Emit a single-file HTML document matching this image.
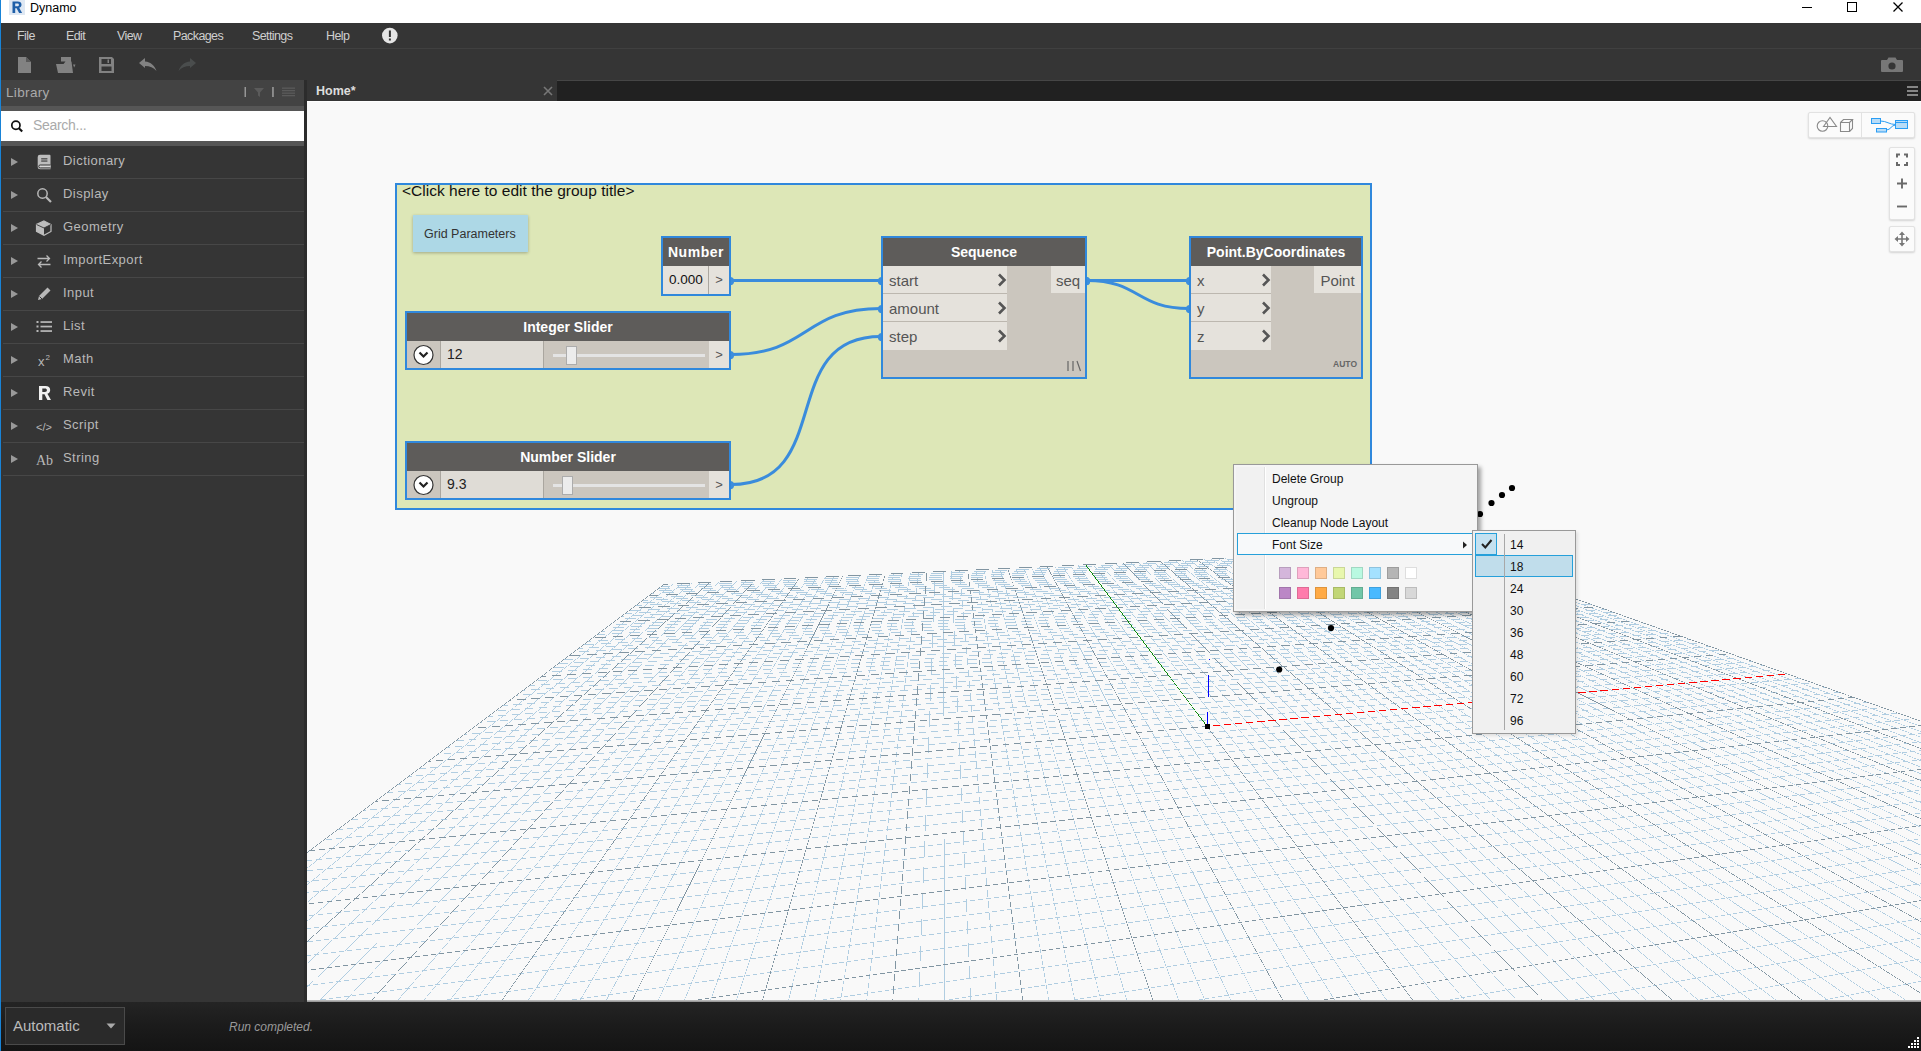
<!DOCTYPE html>
<html><head><meta charset="utf-8"><title>Dynamo</title>
<style>
*{box-sizing:border-box;margin:0;padding:0}
html,body{width:1921px;height:1051px;overflow:hidden;background:#353535}
body{position:relative;font-family:"Liberation Sans",sans-serif;font-size:13px;color:#ccc}
.abs{position:absolute}
#titlebar{left:0;top:0;width:1921px;height:23px;background:#fff}
#winborder{left:0;top:0;width:1px;height:1051px;background:#1883d7;z-index:50}
#title{left:30px;top:0;height:16px;line-height:16px;font-size:12.5px;color:#000}
#menubar{left:0;top:23px;width:1921px;height:26px;background:#353535}
#menusep{left:0;top:48px;width:1921px;height:1px;background:#404040}
#toolbar{left:0;top:49px;width:1921px;height:31px;background:#353535}
.mi{position:absolute;top:28px;height:16px;line-height:16px;font-size:12.5px;letter-spacing:-.6px;color:#cfcfcf}
#libhead{left:1px;top:80px;width:303px;height:26px;background:#434343}
#libhead2{left:1px;top:106px;width:303px;height:5px;background:#565656}
#libtitle{left:6px;top:84px;font-size:13.5px;line-height:17px;color:#aaa;letter-spacing:.35px}
#search{left:1px;top:111px;width:303px;height:30px;background:#fff}
#search2{left:1px;top:141px;width:303px;height:5px;background:#565656}
#searchtxt{left:33px;top:117px;font-size:14px;line-height:16px;color:#aaa;letter-spacing:-.3px}
#sidebar{left:1px;top:146px;width:303px;height:856px;background:#353535}
#gutter{left:304px;top:80px;width:3px;height:922px;background:#2c2c2c}
.li{position:absolute;left:0;width:303px;height:33px}
.li::after{content:"";position:absolute;left:2px;right:0;bottom:0;height:1px;background:#474747}
.li .tri{position:absolute;left:10px;top:12px;width:0;height:0;border-left:7px solid #999;border-top:4px solid transparent;border-bottom:4px solid transparent}
.li .tx{position:absolute;left:62px;top:6px;font-size:13px;line-height:17px;color:#b9b9b9;letter-spacing:.45px}
.li svg{position:absolute;left:34px;top:7px}
#tabstrip{left:557px;top:81px;width:1364px;height:20px;background:#212121}
#tab{left:307px;top:80px;width:250px;height:21px;background:#353535}
#tabtx{left:316px;top:84px;font-size:12.5px;line-height:15px;color:#ddd;font-weight:bold}
#canvas{left:307px;top:101px;width:1614px;height:899px;background:#f9f9f9;overflow:hidden}
#canvasline{left:307px;top:1000px;width:1614px;height:2px;background:linear-gradient(#c4c4c4,#8e8e8e)}
#status{left:0;top:1002px;width:1921px;height:49px;background:linear-gradient(#242424,#1b1b1b 50%,#141414)}
#combo{left:5px;top:1007px;width:120px;height:38px;border:1px solid #4a4a4a;background:#2a2a2a}
#combotx{left:13px;top:1017px;font-size:15px;line-height:18px;color:#bbb}
#runtx{left:229px;top:1020px;font-size:12px;line-height:15px;color:#999;font-style:italic}

#canvas .abs{position:absolute}
#group{left:88px;top:82px;width:977px;height:327px;background:#dde7b7;border:2px solid #3088dc}
#gtitle{left:95px;top:81px;font-size:15.5px;letter-spacing:.02px;line-height:17px;color:#111;white-space:nowrap}
#note{left:106px;top:114px;width:115px;height:37px;background:#add8e6;box-shadow:0 1px 3px rgba(0,0,0,.28)}
#notetx{left:117px;top:126px;font-size:12.5px;line-height:15px;color:#333;white-space:nowrap}
.node{position:absolute;border:2px solid #3088dc;background:#cbc6be}
.node .hd{position:absolute;left:0;top:0;right:0;height:28px;background:#5e5c5a;color:#fff;font-weight:bold;font-size:14px;line-height:28px;text-align:center;white-space:nowrap}
.port{position:absolute;background:#e5e2dc;height:28px;font-size:15px;line-height:30px;color:#555;border-bottom:1px solid #bcb7af}
.port.in{left:0;padding-left:6px}
.port.out{right:0;border-bottom:none;text-align:center;height:27px;line-height:29px}
.chev{position:absolute;right:0;top:7px}
.gt{position:absolute;right:0;background:#e5e2dc;color:#555;font-size:13px;text-align:center}
.sl .btn{position:absolute;left:0;top:28px;width:34px;height:27px;background:#cbc6be}
.sl .val{position:absolute;left:33px;top:28px;width:104px;height:27px;background:#dfdcd6;border-left:1px solid #aaa69f;border-right:1px solid #aaa69f;font-size:14px;line-height:27px;color:#222;padding-left:6px}
.sl .trk{position:absolute;left:146px;top:41px;width:152px;height:3px;background:#e4e4e4}
.sl .thb{position:absolute;top:33px;width:11px;height:19px;background:#ececec;border:1px solid #acacac}
.sl .gt{top:28px;width:20px;height:27px;line-height:27px}
.menu{position:absolute;background:#f5f5f5;border:1px solid #999;box-shadow:3px 3px 4px rgba(0,0,0,.35);font-size:12px;color:#111}
.menu .it{position:absolute;left:38px;height:22px;line-height:22px;white-space:nowrap}
.sw{position:absolute;width:12px;height:12px;border:1px solid rgba(0,0,0,.13)}
.vc{position:absolute;background:#fbfbfb;border:1px solid #e2e2e2;box-shadow:0 1px 2px rgba(0,0,0,.15);border-radius:2px}
</style></head><body>
<div class="abs" id="titlebar"></div>
<div class="abs" id="title">Dynamo</div>
<svg class="abs" style="left:9px;top:0" width="16" height="16" viewBox="0 0 16 16"><rect x="0" y="0" width="16" height="15" fill="#dfe8f3"/><path d="M3.5 1.5h5.2c2.4 0 3.8 1.2 3.8 3.2 0 1.6-.9 2.6-2.3 3l2.9 5.3h-3L7.600 8.200H6.200V13H3.500z M6.200 3.600v2.700h2.100c1 0 1.600-.5 1.600-1.400 0-.9-.6-1.300-1.600-1.300z" fill="#1f5fa8"/></svg>
<svg class="abs" style="left:1795px;top:0" width="120" height="20" viewBox="0 0 120 20" fill="none" stroke="#000" stroke-width="1"><path d="M7 7.500h10"/><rect x="52.500" y="2.500" width="9" height="9"/><path d="M98.500 2.500l9 9M107.500 2.500l-9 9" stroke-width="1.250"/></svg>
<div class="abs" id="menubar"></div><div class="abs" id="menusep"></div><div class="abs" id="toolbar"></div>
<div class="mi" style="left:17px">File</div><div class="mi" style="left:66px">Edit</div><div class="mi" style="left:117px">View</div><div class="mi" style="left:173px">Packages</div><div class="mi" style="left:252px">Settings</div><div class="mi" style="left:326px">Help</div>
<svg class="abs" style="left:381px;top:27px" width="18" height="18" viewBox="0 0 18 18"><circle cx="8.800" cy="8.600" r="7.800" fill="#e4e4e4"/><rect x="7.900" y="3.500" width="2" height="6.500" fill="#333"/><rect x="7.900" y="11.500" width="2" height="2" fill="#333"/></svg>
<!-- toolbar icons -->
<svg class="abs" style="left:14px;top:54px" width="190" height="22" viewBox="0 0 190 22">
<g fill="#828282"><path d="M4 3h8l5 5v11H4z"/><path d="M12 3v5h5" fill="#5a5a5a"/>
<path d="M47 3h10v4.500H47zM42 10h7.500l2-2.500H57.500l1.500 11.500H44zM59 10.500h2.500l-1.300 3z"/>
<path d="M85 3h13l2 2v14H85zM87.500 5v5h9.500V5zM87.500 12.500V17h10v-4.500z" fill-rule="evenodd"/><rect x="93.500" y="5.500" width="1.500" height="3.500"/>
<path d="M125 9l6-5v3.500c6 .5 9.500 4 11.500 9.500-3-3.500-6.500-5-11.500-5V14z"/></g>
<path d="M182 9l-6-5v3.500c-6 .5-9.500 4-11.500 9.500 3-3.500 6.500-5 11.500-5V14z" fill="#4a4d4d"/>
</svg>
<svg class="abs" style="left:1879px;top:56px" width="26" height="18" viewBox="0 0 26 18"><path d="M3 4h5l1.500-2.500h7L18 4h5a1 1 0 0 1 1 1v10a1 1 0 0 1-1 1H3a1 1 0 0 1-1-1V5a1 1 0 0 1 1-1z" fill="#777"/><circle cx="13" cy="10" r="3.600" fill="#353535"/></svg>
<!-- library -->
<div class="abs" id="libhead"></div><div class="abs" id="libhead2"></div>
<div class="abs" id="libtitle">Library</div>
<svg class="abs" style="left:240px;top:85px" width="60" height="14" viewBox="0 0 60 14"><g fill="#5b5b5b"><rect x="4.500" y="2" width="1.500" height="10" fill="#969696"/><path d="M14 3h10l-4 4.500V12l-2-1.500V7.500z"/><rect x="32" y="2" width="1.900" height="10" fill="#8c8c8c"/><rect x="42" y="2.500" width="13" height="1.300"/><rect x="42" y="5" width="13" height="1.300"/><rect x="42" y="7.500" width="13" height="1.300"/><rect x="42" y="10" width="13" height="1.300"/></g></svg>
<div class="abs" id="search"></div><div class="abs" id="search2"></div>
<svg class="abs" style="left:9px;top:117.600px" width="16" height="16" viewBox="0 0 16 16" fill="none" stroke="#111" stroke-width="1.700"><circle cx="6.900" cy="7.200" r="4.100"/><path d="M9.900 10.200l3.300 3.300" stroke-width="2.100"/></svg>
<div class="abs" id="searchtxt">Search...</div>
<div class="abs" id="sidebar">
<div class="li" style="top:0px"><div class="tri"></div><svg width="19" height="19" viewBox="0 0 19 19"><path d="M5 1.700h9.500a1 1 0 0 1 1 1V16.300H5.200a2.500 2.500 0 0 1-2.500-2.500V4a2.300 2.300 0 0 1 2.300-2.300z" fill="#bdbdbd"/><rect x="6.200" y="5.300" width="6.200" height="1.100" fill="#353535"/><rect x="6.200" y="7.500" width="6.200" height="1.100" fill="#353535"/><path d="M15.500 12H5.200a1.400 1.400 0 0 0 0 2.900H15.500" fill="#d8d8d8" stroke="#353535" stroke-width="1"/></svg><div class="tx">Dictionary</div></div>
<div class="li" style="top:33px"><div class="tri"></div><svg width="19" height="19" viewBox="0 0 19 19"><circle cx="7.500" cy="7.500" r="4.700" fill="none" stroke="#b8b8b8" stroke-width="1.500"/><path d="M11 11l5 5" stroke="#b8b8b8" stroke-width="2.200"/></svg><div class="tx">Display</div></div>
<div class="li" style="top:66px"><div class="tri"></div><svg width="19" height="19" viewBox="0 0 19 19"><path d="M9 2l7 3.500v7L9 16.300 1.500 12.500v-7z" fill="none" stroke="#bdbdbd" stroke-width="1.200"/><path d="M1.500 5.500L9 9v7.300L1.500 12.500zM1.500 5.500L9 2l7 3.500L9 9z" fill="#bdbdbd"/><path d="M1.500 5.500L9 9l7-3.500" fill="none" stroke="#353535" stroke-width=".9"/></svg><div class="tx">Geometry</div></div>
<div class="li" style="top:99px"><div class="tri"></div><svg width="19" height="19" viewBox="0 0 19 19"><path d="M2.500 6.500h12M11.500 3.500l3 3-3 3M15.500 12.500h-12M6.500 9.500l-3 3 3 3" fill="none" stroke="#b8b8b8" stroke-width="1.300"/></svg><div class="tx">ImportExport</div></div>
<div class="li" style="top:132px"><div class="tri"></div><svg width="19" height="19" viewBox="0 0 19 19"><path d="M3 15l1-4 8.500-8.500 3 3L7 14z" fill="#b8b8b8"/><path d="M4.500 11.500l2.500 2.500" stroke="#353535" stroke-width="1"/></svg><div class="tx">Input</div></div>
<div class="li" style="top:165px"><div class="tri"></div><svg width="19" height="19" viewBox="0 0 19 19"><g fill="#b8b8b8"><rect x="1.500" y="3" width="2" height="2"/><rect x="5.500" y="3.200" width="11.500" height="1.700"/><rect x="1.500" y="7.500" width="2" height="2"/><rect x="5.500" y="7.700" width="11.500" height="1.700"/><rect x="1.500" y="12" width="2" height="2"/><rect x="5.500" y="12.200" width="11.500" height="1.700"/></g></svg><div class="tx">List</div></div>
<div class="li" style="top:198px"><div class="tri"></div><svg width="19" height="19" viewBox="0 0 19 19"><text x="3" y="15" font-family="Liberation Sans" font-size="13" fill="#b8b8b8">x</text><text x="10.500" y="9" font-family="Liberation Sans" font-size="8" fill="#b8b8b8">2</text></svg><div class="tx">Math</div></div>
<div class="li" style="top:231px"><div class="tri"></div><svg width="19" height="19" viewBox="0 0 19 19"><path d="M4 2h6.500c3 0 4.700 1.500 4.700 4 0 2-1.100 3.200-2.800 3.700L16 16h-3.600l-2.900-5.800H7.300V16H4z M7.300 4.600v3.300h2.600c1.300 0 2-.6 2-1.700s-.7-1.600-2-1.600z" fill="#f0f0f0"/></svg><div class="tx">Revit</div></div>
<div class="li" style="top:264px"><div class="tri"></div><svg width="19" height="19" viewBox="0 0 19 19"><text x="1" y="14" font-family="Liberation Sans" font-size="11" fill="#b8b8b8">&lt;/&gt;</text></svg><div class="tx">Script</div></div>
<div class="li" style="top:297px"><div class="tri"></div><svg width="19" height="19" viewBox="0 0 19 19"><text x="1" y="15" font-family="Liberation Serif" font-size="14" fill="#b8b8b8">Ab</text></svg><div class="tx">String</div></div>
</div>
<div class="abs" id="gutter"></div>
<div class="abs" id="tabstrip"></div><div class="abs" id="tab"></div>
<div class="abs" id="tabtx">Home*</div>
<svg class="abs" style="left:542px;top:85px" width="12" height="12" viewBox="0 0 12 12"><path d="M2 2l8 8M10 2l-8 8" stroke="#777" stroke-width="1.600"/></svg>
<svg class="abs" style="left:1906px;top:85px" width="14" height="12" viewBox="0 0 14 12" fill="#858585"><rect x="1" y="1" width="11" height="2"/><rect x="1" y="5" width="11" height="2"/><rect x="1" y="9" width="11" height="2"/></svg>
<div class="abs" style="left:557px;top:80px;width:1364px;height:1px;background:#464646"></div>
<div class="abs" id="canvas"><div class="abs" style="left:0;top:0;width:1614px;height:1px;background:#fff"></div>
<svg class="abs" style="left:0;top:0" width="1614" height="899" viewBox="0 0 1614 899">
<g shape-rendering="crispEdges"><path d="M-6.82 772.90L366.32 483.21L365.95 482.74L-7.18 772.42ZM-6.81 789.59L375.59 482.78L375.22 482.31L-7.19 789.12ZM-6.81 807.44L384.83 482.34L384.44 481.88L-7.19 806.98ZM-6.80 826.57L394.02 481.91L393.63 481.45L-7.20 826.12ZM-6.80 869.26L412.30 481.05L411.89 480.61L-7.20 868.82ZM-6.79 893.17L421.38 480.62L420.96 480.19L-7.21 892.74ZM8.03 904.21L430.42 480.19L430.00 479.77L7.60 903.79ZM34.31 904.21L439.43 479.77L438.99 479.35L33.87 903.79ZM86.86 904.20L457.33 478.92L456.87 478.53L86.41 903.80ZM113.13 904.19L466.22 478.50L465.76 478.11L112.67 903.81ZM139.40 904.19L475.08 478.08L474.61 477.71L138.93 903.81ZM165.67 904.18L483.90 477.66L483.42 477.30L165.19 903.82ZM218.20 904.17L501.43 476.83L500.93 476.50L217.70 903.83ZM244.46 904.16L510.14 476.41L509.63 476.10L243.95 903.84ZM270.72 904.15L518.82 476.00L518.30 475.70L270.20 903.85ZM296.97 904.14L527.46 475.59L526.93 475.30L296.45 903.86ZM349.48 904.12L544.64 474.77L544.09 474.52L348.93 903.88ZM1490.79 904.29L1623.06 878.87L1622.94 878.28L1490.68 903.71ZM375.73 904.11L553.17 474.36L552.62 474.13L375.17 903.89ZM1364.75 904.29L1623.05 856.49L1622.95 855.90L1364.64 903.71ZM401.97 904.10L561.67 473.95L561.11 473.74L401.41 903.90ZM1238.64 904.30L1623.05 835.72L1622.95 835.12L1238.54 903.70ZM428.22 904.09L570.14 473.54L569.57 473.36L427.65 903.91ZM1112.49 904.30L1623.05 816.37L1622.95 815.78L1112.38 903.70ZM480.69 904.07L586.97 472.74L586.39 472.59L480.11 903.93ZM860.01 904.30L1623.05 781.43L1622.95 780.84L859.91 903.70ZM506.93 904.06L595.33 472.33L594.74 472.21L506.34 903.94ZM733.69 904.30L1623.05 765.60L1622.95 765.00L733.59 903.70ZM533.16 904.05L603.66 471.93L603.07 471.83L532.57 903.95ZM607.31 904.30L1623.04 750.72L1622.96 750.13L607.22 903.70ZM559.39 904.04L611.96 471.53L611.36 471.46L558.80 903.96ZM480.88 904.30L1623.04 736.73L1622.96 736.13L480.79 903.70ZM611.84 904.01L628.45 470.74L627.85 470.71L611.24 903.99ZM227.85 904.30L1623.04 711.07L1622.96 710.47L227.77 903.70ZM638.06 904.00L636.64 470.34L636.04 470.34L637.46 904.00ZM101.26 904.30L1623.04 699.28L1622.96 698.68L101.18 903.70ZM664.28 903.99L644.80 469.95L644.20 469.97L663.68 904.01ZM-6.96 901.88L1623.04 688.11L1622.96 687.51L-7.04 901.28ZM690.49 903.97L652.93 469.55L652.33 469.61L689.90 904.03ZM-6.96 885.76L1623.04 677.51L1622.96 676.92L-7.04 885.16ZM742.92 903.95L669.09 468.77L668.50 468.87L742.32 904.05ZM-6.96 855.87L1623.04 657.87L1622.96 657.28L-7.04 855.27ZM769.12 903.94L677.13 468.39L676.54 468.51L768.54 904.06ZM-6.96 841.99L1623.04 648.76L1622.96 648.16L-7.04 841.39ZM795.33 903.93L685.13 468.00L684.54 468.15L794.74 904.07ZM-6.97 828.76L1623.03 640.06L1622.97 639.47L-7.03 828.16ZM821.53 903.92L693.09 467.62L692.52 467.79L820.95 904.08ZM-6.97 816.13L1623.03 631.76L1622.97 631.17L-7.03 815.53ZM873.92 903.89L708.93 466.85L708.37 467.07L873.36 904.11ZM-6.97 792.52L1606.93 617.99L1606.86 617.40L-7.03 791.92ZM900.11 903.88L716.81 466.48L716.26 466.71L899.56 904.12ZM-6.97 781.47L1591.06 612.37L1590.99 611.77L-7.03 780.87ZM926.30 903.87L724.65 466.10L724.11 466.35L925.76 904.13ZM-6.97 770.88L1575.70 606.93L1575.64 606.34L-7.03 770.28ZM952.49 903.87L732.46 465.72L731.93 465.99L951.96 904.13ZM-6.97 760.72L1560.83 601.66L1560.77 601.07L-7.03 760.12ZM1004.86 903.85L748.00 464.98L747.48 465.28L1004.34 904.15ZM17.02 739.26L1532.45 591.61L1532.39 591.02L16.96 738.66ZM1031.04 903.84L755.72 464.61L755.21 464.93L1030.53 904.16ZM30.68 728.99L1518.91 586.82L1518.85 586.22L30.62 728.40ZM1057.22 903.83L763.41 464.25L762.91 464.58L1056.72 904.17ZM43.74 719.17L1505.76 582.16L1505.71 581.57L43.68 718.57ZM1083.39 903.83L771.07 463.88L770.58 464.23L1082.91 904.17ZM56.25 709.76L1493.01 577.64L1492.95 577.05L56.20 709.16ZM1135.74 903.81L786.31 463.15L785.84 463.53L1135.27 904.19ZM79.75 692.09L1468.58 568.99L1468.53 568.40L79.70 691.49ZM1161.91 903.81L793.88 462.79L793.42 463.18L1161.45 904.19ZM90.80 683.78L1456.89 564.85L1456.83 564.25L90.75 683.18ZM1188.07 903.80L801.43 462.44L800.98 462.83L1187.62 904.20ZM101.42 675.79L1445.51 560.82L1445.46 560.23L101.37 675.19ZM1214.24 903.80L808.95 462.08L808.50 462.48L1213.80 904.20ZM111.63 668.11L1434.45 556.91L1434.40 556.31L111.58 667.51ZM1266.56 903.79L823.89 461.37L823.47 461.79L1266.13 904.21ZM130.93 653.60L1413.21 549.38L1413.16 548.78L130.88 653.00ZM1292.72 903.78L831.33 461.02L830.91 461.45L1292.30 904.22ZM140.06 646.74L1403.01 545.77L1402.96 545.17L140.01 646.14ZM1318.87 903.78L838.73 460.67L838.32 461.11L1318.46 904.22ZM148.86 640.12L1393.07 542.25L1393.02 541.65L148.81 639.52ZM1345.02 903.78L846.11 460.32L845.71 460.77L1344.62 904.22ZM157.35 633.73L1383.38 538.82L1383.34 538.22L157.31 633.13ZM1397.32 903.77L860.77 459.63L860.39 460.09L1396.94 904.23ZM173.48 621.60L1364.74 532.22L1364.69 531.62L173.44 621.00ZM1423.47 903.77L868.07 459.28L867.69 459.75L1423.09 904.23ZM181.15 615.84L1355.76 529.04L1355.72 528.44L181.10 615.24ZM1449.61 903.76L875.33 458.94L874.97 459.41L1449.24 904.24ZM188.56 610.26L1347.00 525.93L1346.96 525.33L188.52 609.66ZM1475.75 903.76L882.57 458.60L882.21 459.08L1475.39 904.24ZM195.74 604.86L1338.45 522.91L1338.41 522.31L195.69 604.27ZM1528.03 903.75L896.97 457.92L896.62 458.41L1527.68 904.25ZM209.42 594.58L1321.96 517.06L1321.92 516.46L209.38 593.98ZM1554.16 903.75L904.13 457.58L903.79 458.08L1553.82 904.25ZM215.95 589.67L1314.00 514.24L1313.96 513.64L215.90 589.07ZM1580.30 903.75L911.26 457.25L910.92 457.74L1579.96 904.25ZM222.27 584.91L1306.22 511.49L1306.18 510.89L222.23 584.31ZM1606.43 903.75L918.36 456.91L918.04 457.41L1606.10 904.25ZM228.42 580.29L1298.62 508.80L1298.58 508.20L228.38 579.69ZM1623.16 881.86L932.50 456.25L932.18 456.76L1622.84 882.37ZM240.17 571.45L1283.92 503.59L1283.88 502.99L240.13 570.85ZM1623.15 866.70L939.52 455.92L939.21 456.43L1622.85 867.21ZM245.79 567.22L1276.81 501.07L1276.77 500.47L245.76 566.62ZM1623.15 852.28L946.52 455.59L946.22 456.10L1622.85 852.80ZM251.26 563.11L1269.86 498.61L1269.82 498.01L251.22 562.51ZM1623.15 838.55L953.50 455.26L953.20 455.78L1622.85 839.07ZM256.58 559.11L1263.05 496.20L1263.02 495.60L256.54 558.51ZM1623.14 812.95L967.38 454.61L967.09 455.13L1622.86 813.48ZM266.78 551.44L1249.88 491.53L1249.84 490.93L266.74 550.84ZM1623.14 801.01L974.28 454.28L973.99 454.81L1622.86 801.54ZM271.68 547.75L1243.49 489.27L1243.46 488.67L271.64 547.15ZM1623.14 789.58L981.15 453.96L980.87 454.49L1622.86 790.11ZM276.45 544.17L1237.24 487.06L1237.20 486.46L276.41 543.57ZM1623.14 778.64L988.00 453.64L987.73 454.17L1622.86 779.17ZM281.10 540.67L1231.11 484.89L1231.08 484.29L281.06 540.07ZM1623.13 758.09L1001.62 453.00L1001.36 453.54L1622.87 758.63ZM290.04 533.95L1219.23 480.68L1219.20 480.08L290.00 533.35ZM1623.13 748.44L1008.40 452.68L1008.14 453.22L1622.87 748.98ZM294.34 530.71L1213.46 478.64L1213.43 478.04L294.31 530.11ZM1623.13 739.16L1015.15 452.36L1014.90 452.91L1622.87 739.70ZM298.54 527.55L1207.81 476.63L1207.78 476.04L298.51 526.95ZM1623.13 730.23L1021.88 452.05L1021.63 452.59L1622.87 730.78ZM302.64 524.47L1202.27 474.67L1202.23 474.07L302.60 523.87ZM1623.12 713.38L1035.26 451.42L1035.02 451.97L1622.88 713.93ZM310.54 518.53L1191.50 470.86L1191.46 470.26L310.50 517.93ZM1623.12 705.41L1041.91 451.11L1041.67 451.66L1622.88 705.96ZM314.35 515.67L1186.26 469.00L1186.23 468.40L314.32 515.07ZM1623.12 697.72L1048.55 450.80L1048.31 451.35L1622.88 698.27ZM318.07 512.87L1181.13 467.18L1181.10 466.58L318.04 512.27ZM1623.12 690.31L1055.15 450.49L1054.92 451.04L1622.88 690.86ZM321.71 510.13L1176.09 465.40L1176.06 464.80L321.68 509.53ZM1623.11 676.23L1068.30 449.87L1068.07 450.43L1622.89 676.79ZM328.74 504.84L1166.28 461.92L1166.25 461.33L328.71 504.24ZM1623.11 669.54L1074.83 449.57L1074.61 450.12L1622.89 670.10ZM332.14 502.29L1161.51 460.24L1161.48 459.64L332.11 501.69ZM1623.11 663.07L1081.35 449.26L1081.13 449.82L1622.89 663.63ZM335.46 499.79L1156.82 458.58L1156.79 457.98L335.43 499.19ZM1623.11 656.81L1087.84 448.96L1087.62 449.52L1622.89 657.37ZM338.72 497.34L1152.22 456.94L1152.19 456.35L338.69 496.74ZM1623.11 644.88L1100.75 448.35L1100.54 448.91L1622.89 645.44ZM345.01 492.60L1143.25 453.77L1143.22 453.17L344.98 492.01ZM1623.10 639.19L1107.17 448.05L1106.97 448.61L1622.90 639.75ZM348.06 490.31L1138.88 452.22L1138.86 451.62L348.03 489.71ZM1623.10 633.67L1113.57 447.75L1113.37 448.31L1622.90 634.23ZM351.05 488.06L1134.59 450.70L1134.56 450.10L351.02 487.47ZM1623.10 628.31L1119.95 447.45L1119.75 448.02L1622.90 628.88ZM353.97 485.87L1130.37 449.21L1130.34 448.61L353.95 485.27Z" fill="#b0cde1"/><path d="M-6.82 757.25L357.01 483.65L356.65 483.17L-7.18 756.77ZM-6.80 847.12L403.18 481.48L402.78 481.03L-7.20 846.67ZM60.58 904.20L448.40 479.34L447.95 478.94L60.14 903.80ZM191.94 904.17L492.68 477.24L492.19 476.90L191.44 903.83ZM323.23 904.13L536.07 475.18L535.53 474.91L322.69 903.87ZM1616.79 904.29L1623.06 903.04L1622.94 902.45L1616.67 903.71ZM454.46 904.08L578.57 473.14L577.99 472.97L453.88 903.92ZM986.27 904.30L1623.05 798.32L1622.95 797.73L986.18 903.70ZM585.62 904.02L620.22 471.13L619.62 471.09L585.02 903.98ZM354.39 904.30L1623.04 723.53L1622.96 722.94L354.31 903.70ZM716.71 903.96L661.03 469.16L660.43 469.24L716.11 904.04ZM-6.96 870.44L1623.04 667.45L1622.96 666.85L-7.04 869.84ZM847.73 903.90L701.03 467.23L700.46 467.43L847.16 904.10ZM-6.97 804.06L1623.03 623.83L1622.97 623.24L-7.03 803.47ZM978.68 903.86L740.25 465.35L739.72 465.64L978.15 904.14ZM2.74 750.00L1546.42 596.56L1546.36 595.96L2.68 749.41ZM1109.57 903.82L778.71 463.52L778.23 463.88L1109.09 904.18ZM68.25 700.74L1480.62 573.26L1480.57 572.66L68.19 700.14ZM1240.40 903.79L816.43 461.72L816.00 462.14L1239.97 904.21ZM121.46 660.72L1423.69 553.09L1423.64 552.50L121.41 660.12ZM1371.17 903.77L853.45 459.97L853.06 460.43L1370.78 904.23ZM165.56 627.56L1373.94 535.48L1373.90 534.88L165.51 626.96ZM1501.89 903.76L889.78 458.26L889.43 458.74L1501.54 904.24ZM202.69 599.64L1330.11 519.95L1330.07 519.35L202.64 599.04ZM1623.16 897.81L925.44 456.58L925.12 457.09L1622.84 898.31ZM234.38 575.80L1291.19 506.16L1291.15 505.57L234.34 575.21ZM1623.15 825.46L960.45 454.93L960.16 455.46L1622.85 825.98ZM261.75 555.22L1256.40 493.84L1256.36 493.24L261.71 554.62ZM1623.13 768.15L994.82 453.32L994.56 453.85L1622.87 768.69ZM285.62 537.27L1225.11 482.76L1225.08 482.16L285.59 536.67ZM1623.12 721.65L1028.58 451.73L1028.33 452.28L1622.88 722.19ZM306.63 521.47L1196.83 472.75L1196.80 472.15L306.60 520.87ZM1623.11 683.15L1061.74 450.18L1061.51 450.73L1622.89 683.70ZM325.26 507.46L1171.14 463.65L1171.11 463.05L325.23 506.86ZM1623.11 650.75L1094.31 448.65L1094.09 449.21L1622.89 651.31ZM341.90 494.95L1147.70 455.34L1147.67 454.74L341.87 494.35ZM1623.10 623.12L1126.31 447.15L1126.11 447.72L1622.90 623.68ZM356.84 483.71L1126.22 447.74L1126.19 447.14L356.81 483.11Z" fill="#8195a2"/>
<path d="M900.25 625.14L778.77 463.47L778.17 463.92L899.65 625.59Z" fill="#0a8a0a"/><path d="M899.98 625.70L1480.62 573.29L1480.56 572.63L899.92 625.04Z" fill="#ff0000"/>
<rect x="901" y="574" width="1" height="22" fill="#0000ff"/><rect x="900" y="611" width="1" height="14" fill="#0000ff"/><rect x="902" y="558" width="1" height="1" fill="#0000ff"/>
<rect x="898" y="623" width="5" height="5" fill="#000"/></g>
<g fill="#000"><circle cx="1205" cy="387" r="3.1"/><circle cx="1195" cy="394" r="3.1"/><circle cx="1184.5" cy="402" r="3.1"/><circle cx="1173" cy="413" r="3.1"/><circle cx="1024" cy="527" r="3.1"/><circle cx="972.2" cy="568.5" r="3.1"/></g>
</svg>
<div class="abs" id="group"></div>
<div class="abs" id="gtitle">&lt;Click here to edit the group title&gt;</div>
<div class="abs" id="note"></div><div class="abs" id="notetx">Grid Parameters</div>
<svg class="abs" style="left:0;top:0" width="1614" height="899" viewBox="0 0 1614 899">
<path d="M424 179.5L574 179.5M424 253.5C502.4 253.5 495.6 207.5 574 207.5M424 383.5C529.4 383.5 468.6 235.5 574 235.5M780 179.5L882 179.5M780 179.5C832.9 179.5 829.1 207.5 882 207.5" fill="none" stroke="#3a8cdc" stroke-width="3"/><g fill="#3d8edc"><circle cx="423" cy="180.2" r="4.1"/><circle cx="575" cy="180.2" r="4.1"/><circle cx="423" cy="254.2" r="4.1"/><circle cx="575" cy="208.2" r="4.1"/><circle cx="423" cy="384.2" r="4.1"/><circle cx="575" cy="236.2" r="4.1"/><circle cx="779" cy="180.2" r="4.1"/><circle cx="883" cy="180.2" r="4.1"/><circle cx="779" cy="180.2" r="4.1"/><circle cx="883" cy="208.2" r="4.1"/></g></svg>

<!-- Number -->
<div class="node" style="left:354px;top:135px;width:70px;height:60px"><div class="hd" style="letter-spacing:.55px">Number</div>
<div class="abs" style="left:0;top:28px;width:46px;height:28px;background:#e5e2dc;border-right:1px solid #aaa69f;font-size:13.5px;line-height:28px;color:#111;padding-left:6px">0.000</div>
<div class="gt" style="top:28px;width:20px;height:28px;line-height:28px">&gt;</div></div>
<!-- Integer Slider -->
<div class="node sl" style="left:98px;top:210px;width:326px;height:59px"><div class="hd">Integer Slider</div>
<div class="btn"><svg width="34" height="27" viewBox="0 0 34 27"><circle cx="16.500" cy="14" r="9.500" fill="#fff" stroke="#333" stroke-width="1.200"/><path d="M12.500 11.500l4 4 4-4" fill="none" stroke="#222" stroke-width="2.200"/></svg></div>
<div class="val">12</div><div class="trk"></div><div class="thb" style="left:159px"></div><div class="gt">&gt;</div></div>
<!-- Number Slider -->
<div class="node sl" style="left:98px;top:340px;width:326px;height:59px"><div class="hd">Number Slider</div>
<div class="btn"><svg width="34" height="27" viewBox="0 0 34 27"><circle cx="16.500" cy="14" r="9.500" fill="#fff" stroke="#333" stroke-width="1.200"/><path d="M12.500 11.500l4 4 4-4" fill="none" stroke="#222" stroke-width="2.200"/></svg></div>
<div class="val">9.3</div><div class="trk"></div><div class="thb" style="left:155px"></div><div class="gt">&gt;</div></div>
<!-- Sequence -->
<div class="node" style="left:574px;top:135px;width:206px;height:143px"><div class="hd">Sequence</div>
<div class="port in" style="top:28px;width:124px">start<svg class="chev" width="10" height="14" viewBox="0 0 10 14"><path d="M2 1.500l5.500 5.500L2 12.500" fill="none" stroke="#555" stroke-width="2.600"/></svg></div>
<div class="port in" style="top:56px;width:124px">amount<svg class="chev" width="10" height="14" viewBox="0 0 10 14"><path d="M2 1.500l5.500 5.500L2 12.500" fill="none" stroke="#555" stroke-width="2.600"/></svg></div>
<div class="port in" style="top:84px;width:124px;border-bottom:none">step<svg class="chev" width="10" height="14" viewBox="0 0 10 14"><path d="M2 1.500l5.500 5.500L2 12.500" fill="none" stroke="#555" stroke-width="2.600"/></svg></div>
<div class="port out" style="top:28px;width:34px">seq</div>
<svg class="abs" style="left:183px;top:122px" width="16" height="12" viewBox="0 0 16 12"><path d="M2 1v10M7 1v10M11 1l3.500 10" stroke="#666" stroke-width="1.200" fill="none"/></svg></div>
<!-- Point.ByCoordinates -->
<div class="node" style="left:882px;top:135px;width:174px;height:143px"><div class="hd">Point.ByCoordinates</div>
<div class="port in" style="top:28px;width:80px">x<svg class="chev" width="10" height="14" viewBox="0 0 10 14"><path d="M2 1.500l5.500 5.500L2 12.500" fill="none" stroke="#555" stroke-width="2.600"/></svg></div>
<div class="port in" style="top:56px;width:80px">y<svg class="chev" width="10" height="14" viewBox="0 0 10 14"><path d="M2 1.500l5.500 5.500L2 12.500" fill="none" stroke="#555" stroke-width="2.600"/></svg></div>
<div class="port in" style="top:84px;width:80px;border-bottom:none">z<svg class="chev" width="10" height="14" viewBox="0 0 10 14"><path d="M2 1.500l5.500 5.500L2 12.500" fill="none" stroke="#555" stroke-width="2.600"/></svg></div>
<div class="port out" style="top:28px;width:47px">Point</div>
<div class="abs" style="right:4px;top:121px;font-size:8.500px;font-weight:bold;color:#666;line-height:10px">AUTO</div></div>
<!-- context menu -->
<div class="menu" style="left:926px;top:363px;width:245px;height:148px">
<div class="abs" style="left:2px;top:2px;width:29px;height:142px;background:#f1f1f1;border-right:1px solid #e0e0e0;box-shadow:1px 0 0 #fff"></div>
<div class="abs" style="left:3px;top:68px;width:236px;height:22px;border:1px solid #26a0da;background:#f7f9fa"></div>
<div class="it" style="top:3px">Delete Group</div><div class="it" style="top:25px">Ungroup</div><div class="it" style="top:47px">Cleanup Node Layout</div><div class="it" style="top:69px">Font Size</div>
<svg class="abs" style="left:228px;top:76px" width="6" height="8" viewBox="0 0 6 8"><path d="M1 0.500l4 3.500-4 3.500z" fill="#222"/></svg>
<div class="sw" style="left:45px;top:102px;background:#d4b6db"></div><div class="sw" style="left:63px;top:102px;background:#ffb8d8"></div><div class="sw" style="left:81px;top:102px;background:#ffc999"></div><div class="sw" style="left:99px;top:102px;background:#e8f7ad"></div><div class="sw" style="left:117px;top:102px;background:#b9f9e1"></div><div class="sw" style="left:135px;top:102px;background:#a4e1ff"></div><div class="sw" style="left:153px;top:102px;background:#b5b5b5"></div><div class="sw" style="left:171px;top:102px;background:#ffffff"></div><div class="sw" style="left:45px;top:122px;background:#bb87c6"></div><div class="sw" style="left:63px;top:122px;background:#ff7bac"></div><div class="sw" style="left:81px;top:122px;background:#ffaa45"></div><div class="sw" style="left:99px;top:122px;background:#c1d676"></div><div class="sw" style="left:117px;top:122px;background:#71c6a8"></div><div class="sw" style="left:135px;top:122px;background:#48b9ff"></div><div class="sw" style="left:153px;top:122px;background:#848484"></div><div class="sw" style="left:171px;top:122px;background:#d8d8d8"></div>
</div>
<div class="menu" style="left:1165px;top:429px;width:104px;height:204px;background:#f0f0f0;box-shadow:2px 2px 3px rgba(0,0,0,.10)">
<div class="abs" style="left:2px;top:2px;width:22px;height:22px;border:1px solid #26a0da;background:#c4e1f0"></div>
<svg class="abs" style="left:7px;top:7px" width="14" height="12" viewBox="0 0 14 12"><path d="M2 6l3.300 3.500L11.500 2" fill="none" stroke="#222" stroke-width="2"/></svg>
<div class="abs" style="left:2px;top:24px;width:98px;height:22px;border:1px solid #26a0da;background:#c0ddeb"></div>
<div class="abs" style="left:31px;top:3px;width:1px;height:196px;background:#a8a8a8"></div>
<div class="it" style="left:37px;top:3px">14</div><div class="it" style="left:37px;top:25px">18</div><div class="it" style="left:37px;top:47px">24</div><div class="it" style="left:37px;top:69px">30</div><div class="it" style="left:37px;top:91px">36</div><div class="it" style="left:37px;top:113px">48</div><div class="it" style="left:37px;top:135px">60</div><div class="it" style="left:37px;top:157px">72</div><div class="it" style="left:37px;top:179px">96</div>
</div>
<!-- view controls -->
<div class="vc" style="left:1501px;top:11px;width:107px;height:26px">
<div class="abs" style="left:52px;top:0;width:1px;height:24px;background:#e2e2e2"></div>
<svg class="abs" style="left:6px;top:1.300px" width="42" height="21" viewBox="0 0 42 21" fill="none" stroke="#8a8a8a" stroke-width="1.100"><circle cx="7.500" cy="12" r="5.300"/><path d="M8.500 12.500L15 3.500l6.500 9z"/><path d="M25.500 8.500h9v9h-9zM25.500 8.500l3-3h9l-3 3M37.500 5.500v9l-3 3"/></svg>
<svg class="abs" style="left:60px;top:3.300px" width="42" height="18" viewBox="0 0 42 18" stroke="#2a9df4" stroke-width="1" fill="#b8dcf7"><rect x="2.500" y="2.500" width="9" height="5"/><rect x="7.500" y="12.500" width="10" height="3.500"/><rect x="26.500" y="4.500" width="12" height="8"/><path d="M11.500 5c6 0 9 3.500 15 3.500M17.500 14c4 0 5-5 9-5" fill="none"/><path d="M26.500 6.500h12" fill="none"/></svg>
</div>
<div class="vc" style="left:1582px;top:46px;width:26px;height:73px">
<svg class="abs" style="left:0;top:-.6px" width="24" height="71" viewBox="0 0 24 71" fill="none" stroke="#6a6a6a" stroke-width="2"><path d="M7 10.500V7.500h3M14 7.500h3v3M17 15v3h-3M10 18H7v-3"/><path d="M7 36.500h10M12 31.500v10" stroke-width="1.900"/><path d="M7 59.500h10" stroke-width="1.900"/></svg>
</div>
<div class="vc" style="left:1582px;top:125px;width:26px;height:26px">
<svg class="abs" style="left:0;top:0" width="24" height="24" viewBox="0 0 24 24" fill="#777" stroke="none"><path d="M12 4.500l3 3.500h-2.200v3.200H16V9l3.500 3-3.500 3v-2.200h-3.200V16H15l-3 3.500L9 16h2.200v-3.200H8V15l-3.500-3L8 9v2.200h3.200V8H9z"/></svg>
</div>
</div><!-- /canvas -->
<div class="abs" id="canvasline"></div>
<div class="abs" id="status"></div>
<div class="abs" id="combo"></div><div class="abs" id="combotx">Automatic</div>
<svg class="abs" style="left:105px;top:1022px" width="12" height="8" viewBox="0 0 12 8"><path d="M1.500 1.500h9L6 6.500z" fill="#aaa"/></svg>
<div class="abs" id="runtx">Run completed.</div>
<svg class="abs" style="left:1907px;top:1036px" width="14" height="14" viewBox="0 0 14 14" fill="#fff"><rect x="10" y="1" width="2" height="2"/><rect x="7" y="4" width="2" height="2"/><rect x="10" y="4" width="2" height="2"/><rect x="4" y="7" width="2" height="2"/><rect x="7" y="7" width="2" height="2"/><rect x="10" y="7" width="2" height="2"/><rect x="1" y="10" width="2" height="2"/><rect x="4" y="10" width="2" height="2"/><rect x="7" y="10" width="2" height="2"/><rect x="10" y="10" width="2" height="2"/></svg>
<div class="abs" id="winborder"></div>
</body></html>
